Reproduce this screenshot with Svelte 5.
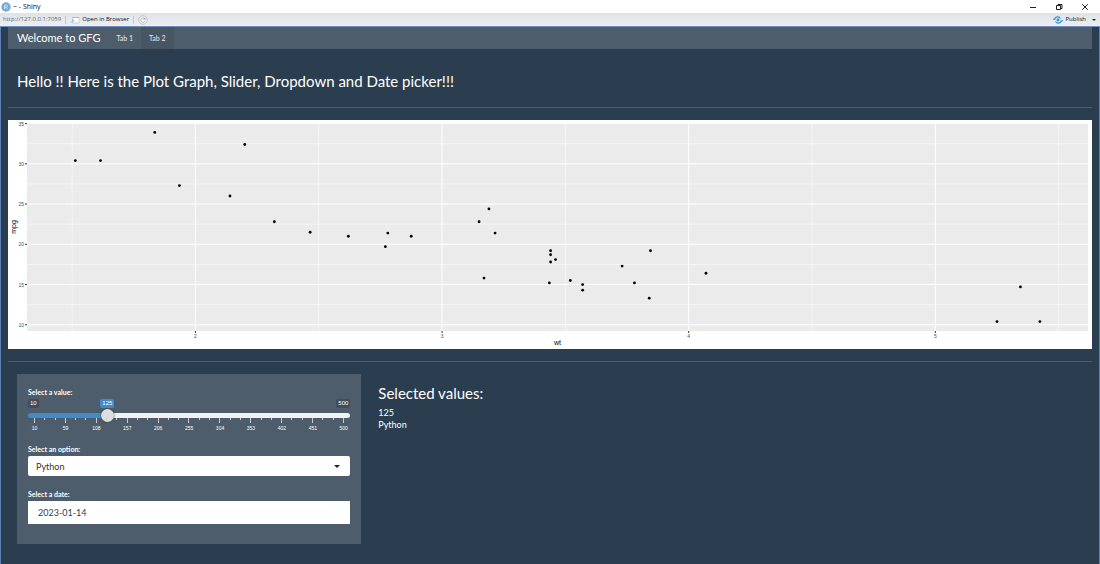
<script>
    let value = 125;
    let option = 'Python';
    let date = '2023-01-14';
    let plotWidth = 1084;

    const min = 10;
    const max = 500;
    const options = ['Python', 'R', 'Java'];
    const gridLabels = [10, 59, 108, 157, 206, 255, 304, 353, 402, 451, 500];
    const ticks = Array.from({ length: 31 }, (_, i) => i);

    // mtcars: [wt, mpg]
    const cars = [
        [2.62, 21], [2.875, 21], [2.32, 22.8], [3.215, 21.4], [3.44, 18.7], [3.46, 18.1],
        [3.57, 14.3], [3.19, 24.4], [3.15, 22.8], [3.44, 19.2], [3.44, 17.8], [4.07, 16.4],
        [3.73, 17.3], [3.78, 15.2], [5.25, 10.4], [5.424, 10.4], [5.345, 14.7], [2.2, 32.4],
        [1.615, 30.4], [1.835, 33.9], [2.465, 21.5], [3.52, 15.5], [3.435, 15.2], [3.84, 13.3],
        [3.845, 19.2], [1.935, 27.3], [2.14, 26], [1.513, 30.4], [3.17, 15.8], [2.77, 19.7],
        [3.57, 15], [2.78, 21.4]
    ];

    const panel = { left: 19, top: 3, bottom: 211 };
    $: panelWidth = plotWidth - panel.left - 4;
    $: xPos = (wt) => panel.left + (wt - 1.317) / 4.302 * panelWidth;
    const yPos = (mpg) => panel.bottom - (mpg - 9.225) / 25.85 * (panel.bottom - panel.top);

    $: share = (value - min) / (max - min);
</script>

<svelte:head>
    <title>~ - Shiny</title>
</svelte:head>

<div class="window">
    <header class="titlebar">
        <svg class="logo" viewBox="0 0 10 10" aria-hidden="true">
            <circle cx="5" cy="5" r="4.7" fill="#75aadb" />
            <path d="M3.6 7.2V3h1.7a1.1 1.1 0 0 1 0 2.3H3.6M5.1 5.3l1.5 1.9" fill="none" stroke="#dceaf7" stroke-width=".8" />
        </svg>
        <span class="title">~ - Shiny</span>
        <div class="controls">
            <button aria-label="Minimize"><svg viewBox="0 0 8 8"><path d="M1 4.5h6" /></svg></button>
            <button aria-label="Restore"><svg viewBox="0 0 8 8"><path d="M1.5 2.5h4v4h-4zM3 2.5v-1h4v4H5.5" /></svg></button>
            <button aria-label="Close"><svg viewBox="0 0 8 8"><path d="M1.2 1.2l5.6 5.6M6.8 1.2L1.2 6.8" /></svg></button>
        </div>
    </header>

    <div class="toolbar">
        <span class="url">http://127.0.0.1:7059</span>
        <span class="rule"></span>
        <button>
            <svg class="open" viewBox="0 0 10 8" aria-hidden="true">
                <path d="M2.5 1.5h6.5v5.5H2.5z" fill="#fff" stroke="#b9c6d3" stroke-width=".7" />
                <path d="M2.5 1.5h6.5" stroke="#9fb6ce" />
                <path d="M1 6.8l2.7-2.7M2 4h1.8v1.8" fill="none" stroke="#88b6dc" stroke-width=".8" />
            </svg>
            Open in Browser
        </button>
        <span class="rule"></span>
        <button aria-label="Reload">
            <svg class="reload" viewBox="0 0 10 10">
                <circle cx="5" cy="5" r="4.2" fill="#f4f6f8" stroke="#a9b0b8" stroke-width=".7" />
                <path d="M6.9 4.1A2.2 2.2 0 1 0 7.1 5.6M7.1 2.4v1.9H5.2" fill="none" stroke="#a4abb4" stroke-width=".8" />
            </svg>
        </button>
        <button class="publish">
            <svg viewBox="0 0 10 8" aria-hidden="true">
                <path d="M1.5 2.9C2.7.3 6.3.3 7.5 2.5M8.5 5.1C7.3 7.7 3.7 7.7 2.5 5.5" fill="none" stroke="#2a93d5" stroke-width="1.1" />
                <path d="M0 3.2h2.4M7.6 4.8H10" stroke="#2a93d5" />
                <circle cx="5" cy="4" r="1.4" fill="#2a93d5" />
            </svg>
            Publish
            <span class="caret"></span>
        </button>
    </div>

    <div class="page">
        <nav class="navbar">
            <a class="brand" href="#top">Welcome to GFG</a>
            <a class="tab" href="#tab1">Tab 1</a>
            <a class="tab active" href="#tab2">Tab 2</a>
        </nav>

        <h1>Hello !! Here is the Plot Graph, Slider, Dropdown and Date picker!!!</h1>
        <hr />

        <div class="plot" bind:clientWidth={plotWidth}>
            <svg width={plotWidth} height="229" role="img" aria-label="mpg by wt">
                <rect class="panel" x={panel.left} y={panel.top} width={panelWidth} height={panel.bottom - panel.top} />
                {#each [12.5, 17.5, 22.5, 27.5, 32.5] as mpg}
                    <line class="minor" x1={panel.left} x2={panel.left + panelWidth} y1={yPos(mpg)} y2={yPos(mpg)} />
                {/each}
                {#each [1.5, 2.5, 3.5, 4.5, 5.5] as wt}
                    <line class="minor" x1={xPos(wt)} x2={xPos(wt)} y1={panel.top} y2={panel.bottom} />
                {/each}
                {#each [10, 15, 20, 25, 30, 35] as mpg}
                    <line class="major" x1={panel.left} x2={panel.left + panelWidth} y1={yPos(mpg)} y2={yPos(mpg)} />
                    <line class="tick" x1={panel.left - 2} x2={panel.left} y1={yPos(mpg)} y2={yPos(mpg)} />
                    <text class="scale" x={panel.left - 3} y={yPos(mpg) + 2} text-anchor="end">{mpg}</text>
                {/each}
                {#each [2, 3, 4, 5] as wt}
                    <line class="major" x1={xPos(wt)} x2={xPos(wt)} y1={panel.top} y2={panel.bottom} />
                    <line class="tick" x1={xPos(wt)} x2={xPos(wt)} y1={panel.bottom} y2={panel.bottom + 2} />
                    <text class="scale" x={xPos(wt)} y={panel.bottom + 7} text-anchor="middle">{wt}</text>
                {/each}
                {#each cars as [wt, mpg]}
                    <circle cx={xPos(wt)} cy={yPos(mpg)} r="1.4" />
                {/each}
                <text class="axis" x={panel.left + panelWidth / 2} y="225" text-anchor="middle">wt</text>
                <text class="axis" transform="translate(8 107) rotate(-90)" text-anchor="middle">mpg</text>
            </svg>
        </div>
        <hr />

        <div class="row">
            <form class="well">
                <label for="value">Select a value:</label>
                <div class="slider">
                    <div class="badges">
                        <span class="badge">{min}</span>
                        <span class="badge">{max}</span>
                        <output class="badge current" for="value" style="left: calc(7px + (100% - 14px) * {share})">{value}</output>
                    </div>
                    <input id="value" type="range" {min} {max} bind:value style="--fill: {share * 100}%" />
                    <div class="ticks">
                        {#each ticks as i}
                            <i class:big={i % 3 === 0}></i>
                        {/each}
                    </div>
                    <div class="grid">
                        {#each gridLabels as n}
                            <span>{n}</span>
                        {/each}
                    </div>
                </div>

                <label for="option">Select an option:</label>
                <div class="select">
                    <select id="option" bind:value={option}>
                        {#each options as o}
                            <option>{o}</option>
                        {/each}
                    </select>
                    <span class="caret"></span>
                </div>

                <label for="date">Select a date:</label>
                <input id="date" class="date" type="text" bind:value={date} />
            </form>

            <section class="result">
                <h2>Selected values:</h2>
                <p>{value}</p>
                <p>{option}</p>
            </section>
        </div>
    </div>
</div>

<style>
    :global(body) {
        background: #2b3e50;
    }
    .window {
        box-sizing: border-box;
        min-height: 100vh;
        font-family: Lato, sans-serif;
        color: #fff;
        display: flex;
        flex-direction: column;
    }
    button {
        display: flex;
        align-items: center;
        padding: 0;
        border: 0;
        background: none;
        font: inherit;
        color: inherit;
    }

    .titlebar, .toolbar {
        display: flex;
        align-items: center;
        height: 13px;
        font-family: "Open Sans", sans-serif;
        line-height: 13px;
        color: #111;
    }
    .titlebar {
        font-size: 7px;
        background: #fff;
    }
    .logo {
        width: 10px;
        height: 10px;
        margin: 0 2px 0 1px;
    }
    .controls {
        display: flex;
        gap: 18px;
        margin-left: auto;
        padding-right: 11px;
    }
    .controls svg {
        width: 8px;
        height: 8px;
        fill: none;
        stroke: #222;
        stroke-width: 1;
    }
    .toolbar {
        gap: 4px;
        padding: 0 4px 0 3px;
        font-size: 6px;
        background: linear-gradient(#dfe2e8, #eceef1);
        border-bottom: 1px solid #6f8fc4;
    }
    .url {
        color: #666;
    }
    .rule {
        width: 1px;
        height: 8px;
        background: #c5c9cf;
    }
    .open {
        width: 10px;
        height: 8px;
        margin-right: 2px;
    }
    .reload {
        width: 10px;
        height: 10px;
    }
    .publish {
        margin-left: auto;
    }
    .publish svg {
        width: 10px;
        height: 8px;
        margin-right: 2px;
    }
    .caret {
        border: 2px solid transparent;
        border-top-color: #222;
        border-bottom: 0;
    }
    .publish .caret {
        margin-left: 6px;
    }

    .page {
        flex: 1;
        padding: 0 7px 16px;
        border: solid #5d80b4;
        border-width: 0 1px;
    }
    .navbar {
        display: flex;
        height: 22px;
        line-height: 22px;
        background: #4e5d6c;
    }
    .navbar a {
        color: #ebebeb;
        text-decoration: none;
    }
    .navbar .brand {
        padding: 0 8px 0 9px;
        font-size: 11px;
        color: #fff;
    }
    .navbar .tab {
        padding: 0 8px;
        font-size: 7px;
    }
    .navbar .active {
        background: #485563;
    }
    h1 {
        margin: 22px 9px 15px;
        font-size: 15px;
        font-weight: 400;
        line-height: 21px;
    }
    hr {
        height: 1px;
        margin: 0 0 12px;
        border: 0;
        background: #4e5d6c;
    }
    .plot {
        margin-bottom: 12px;
        background: #fff;
        overflow: hidden;
    }
    .plot svg {
        display: block;
        font-family: "Liberation Sans", sans-serif;
    }
    .panel {
        fill: #ebebeb;
    }
    .major {
        stroke: #fff;
        stroke-width: 1;
    }
    .minor {
        stroke: #fff;
        stroke-width: .5;
    }
    .tick {
        stroke: #333;
        stroke-width: 1;
    }
    .scale {
        font-size: 5px;
        fill: #4d4d4d;
    }
    .axis {
        font-size: 7px;
        fill: #000;
    }

    .row {
        display: grid;
        grid-template-columns: 1fr 2fr;
    }
    .well {
        margin: 0 8px 0 9px;
        padding: 13px 11px 20px;
        background: #4e5d6c;
    }
    label {
        display: block;
        font-size: 7px;
        font-weight: 700;
        line-height: 10px;
    }
    .slider {
        margin: 2px 0 12px;
        font-family: "Liberation Sans", sans-serif;
    }
    .badges {
        position: relative;
        display: flex;
        justify-content: space-between;
    }
    .badge {
        padding: 0 2px;
        border-radius: 2px;
        background: #414d5a;
        font-size: 6px;
        line-height: 9px;
    }
    .current {
        position: absolute;
        transform: translateX(-50%);
        background: #428bca;
    }
    input[type="range"] {
        appearance: none;
        display: block;
        width: 100%;
        height: 14px;
        margin: 0;
        background: none;
    }
    input[type="range"]::-webkit-slider-runnable-track {
        height: 5px;
        border-radius: 3px;
        background: linear-gradient(to right, #428bca var(--fill), #f2f2f2 var(--fill));
    }
    input[type="range"]::-webkit-slider-thumb {
        appearance: none;
        width: 13px;
        height: 13px;
        margin-top: -4px;
        border-radius: 50%;
        background: #dedede;
        box-shadow: 0 0 2px #333;
    }
    .ticks {
        display: flex;
        justify-content: space-between;
        height: 5px;
        margin: -4px 6px 0;
    }
    .ticks i {
        width: 1px;
        height: 2px;
        background: #c6ccd2;
    }
    .ticks .big {
        height: 5px;
    }
    .grid {
        display: flex;
        justify-content: space-between;
        margin: 1px 6px 0;
        font-size: 5px;
        line-height: 8px;
    }
    .grid span {
        display: flex;
        justify-content: center;
        width: 1px;
    }
    .select {
        display: grid;
        align-items: center;
        margin: 2px 0 13px;
    }
    .select > * {
        grid-area: 1 / 1;
    }
    select, .date {
        box-sizing: border-box;
        width: 100%;
        border: 0;
        background: #fff;
        color: #2b3e50;
        font: 9px Lato, sans-serif;
    }
    select {
        appearance: none;
        height: 20px;
        padding: 0 8px;
        border-radius: 2px;
        color: #333;
    }
    .select .caret {
        justify-self: end;
        margin-right: 10px;
        border-width: 3px 3px 0;
        pointer-events: none;
    }
    .date {
        display: block;
        height: 23px;
        margin-top: 2px;
        padding: 0 10px;
    }
    .result {
        padding: 11px 9px;
    }
    h2 {
        margin: 0 0 5px;
        font-size: 15px;
        font-weight: 400;
        line-height: 17px;
    }
    p {
        margin: 0;
        font-size: 9px;
        line-height: 12px;
    }
</style>
